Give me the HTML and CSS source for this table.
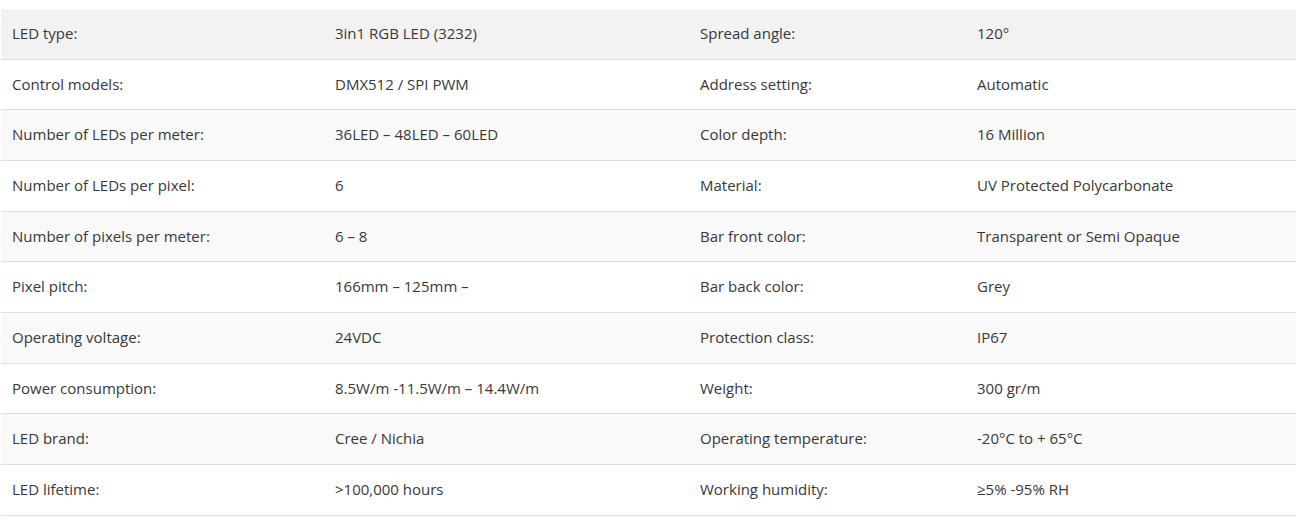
FILE: index.html
```html
<!DOCTYPE html>
<html lang="en">
<head>
<meta charset="utf-8">
<title>Specifications</title>
<link rel="stylesheet" href="styles.css">
</head>
<body>
<div class="wrap">
<table class="specs">
<colgroup>
<col class="c1"><col class="c2"><col class="c3"><col class="c4">
</colgroup>
<tbody>
<tr class="hover"><td>LED type:</td><td>3in1 RGB LED (3232)</td><td>Spread angle:</td><td>120°</td></tr>
<tr><td>Control models:</td><td>DMX512 / SPI PWM</td><td>Address setting:</td><td>Automatic</td></tr>
<tr><td>Number of LEDs per meter:</td><td>36LED – 48LED – 60LED</td><td>Color depth:</td><td>16 Million</td></tr>
<tr><td>Number of LEDs per pixel:</td><td>6</td><td>Material:</td><td>UV Protected Polycarbonate</td></tr>
<tr><td>Number of pixels per meter:</td><td>6 – 8</td><td>Bar front color:</td><td>Transparent or Semi Opaque</td></tr>
<tr><td>Pixel pitch:</td><td>166mm – 125mm –</td><td>Bar back color:</td><td>Grey</td></tr>
<tr><td>Operating voltage:</td><td>24VDC</td><td>Protection class:</td><td>IP67</td></tr>
<tr><td>Power consumption:</td><td>8.5W/m -11.5W/m – 14.4W/m</td><td>Weight:</td><td>300 gr/m</td></tr>
<tr><td>LED brand:</td><td>Cree / Nichia</td><td>Operating temperature:</td><td>-20°C to + 65°C</td></tr>
<tr><td>LED lifetime:</td><td>&gt;100,000 hours</td><td>Working humidity:</td><td>≥5% -95% RH</td></tr>
</tbody>
</table>
</div>
</body>
</html>
```

FILE: styles.css
```css
html, body {
  margin: 0;
  padding: 0;
  background: #ffffff;
}

.wrap {
  padding: 9px 7px 0 1px;
}

.specs {
  width: 1295px;
  border-collapse: collapse;
  table-layout: fixed;
  font-family: "Open Sans", "Liberation Sans", sans-serif;
  font-size: 15px;
  color: #383838;
}

.specs .c1 { width: 323px; }
.specs .c2 { width: 365px; }
.specs .c3 { width: 277px; }
.specs .c4 { width: 330px; }

.specs td {
  padding: 15px 11px;
  line-height: 19.67px;
  text-align: left;
  vertical-align: middle;
  white-space: nowrap;
}

.specs tr {
  border-bottom: 1px solid #dedede;
}

.specs tr:nth-child(odd) {
  background: #f9f9f9;
}

.specs tr.hover {
  background: #f2f2f2;
}
```
